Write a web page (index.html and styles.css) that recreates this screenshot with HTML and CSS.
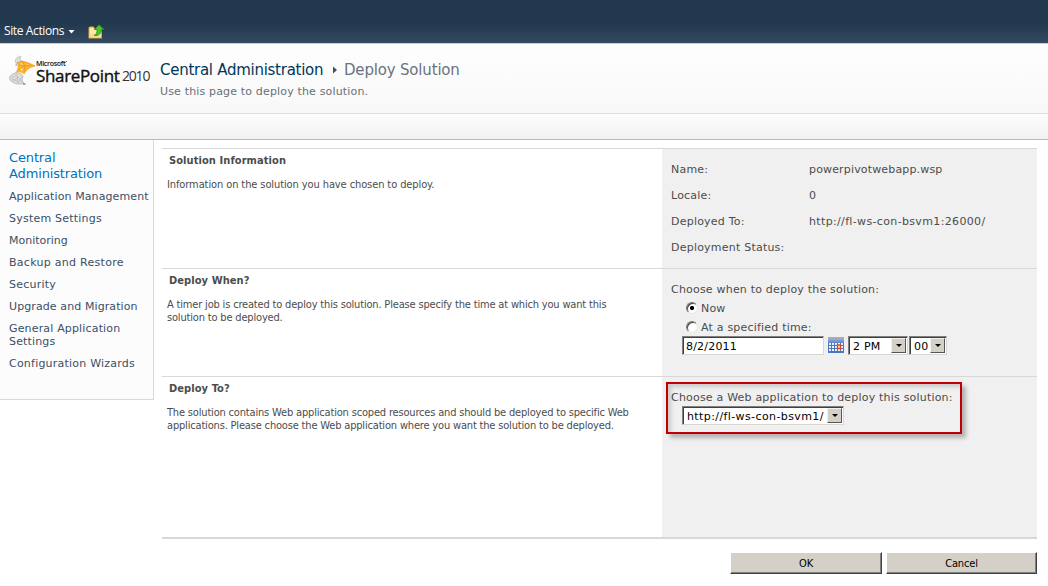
FILE: index.html
```
<!DOCTYPE html>
<html lang="en">
<head>
<meta charset="utf-8">
<title>Deploy Solution</title>
<link rel="stylesheet" href="styles.css">
</head>
<body>
<div class="ribbon">
  <span class="site-actions">Site Actions</span>
  <svg class="ribbon-caret" width="7" height="4" viewBox="0 0 7 4"><path d="M0.5 0h6L3.5 3.5z" fill="#fff"/></svg>
  <svg class="folder-up" width="17" height="16" viewBox="0 0 17 16">
    <path d="M.5 14.500V3.500l1-1h4l1.500 2h7v10z" fill="#d9a53b"/>
    <path d="M1.500 13.500V4.500l.8-1h2.700l1.500 2h6.500v8z" fill="#fbe9ae"/>
    <path d="M1.500 9.500h11.500v4H1.500z" fill="#f9dc94"/>
    <path d="M6 11.500C8.500 10.500 9.300 8.500 9 5.500H6.500L11 .7l5 4.800h-2.700c.2 4-2.800 6.500-7.300 6z" fill="#4cc428" stroke="#248a16" stroke-width=".8"/>
  </svg>
</div>
<header class="header">
  <div class="logo">
    <svg class="logo-mark" width="27" height="30" viewBox="0 0 27 30">
      <path d="M7 7C5 3 8 1 12 .5c-1.500 1.500-1 3.500 1.500 4.500L9 6.500 7 10z" fill="#e0e0de" stroke="#aaa" stroke-width=".6"/>
      <path d="M8 7c5-3 10-1 18 3-6 1-9 4-11 8-3-2-6-2-9-1 3-3 3-6 2-10z" fill="#fdb338"/>
      <path d="M8 7c5-3 10-1 18 3-6 1-9 4-11 8M13 5l3 5 6-1M10 9l6 1-1 6M9 14l7-4" fill="none" stroke="#f39a12" stroke-width=".9"/>
      <path d="M11 8l2-1 1 2zM11 13l3-1-1 3zM18 8l2 0-2 1z" fill="#ffeaa8"/>
      <path d="M5 17.500c4-1.500 8 0 9 3-1.500 2.500-1 4.500.5 6.500-4 2-9 1-12.500-2-3-3-1-6 3-7.500z" fill="#dededd" stroke="#a5a5a5" stroke-width=".7"/>
      <path d="M2 22l6-3 1 8M4 25l5-4 4 5M3 23l7 3 3-5" fill="none" stroke="#b2b2b2" stroke-width=".6"/>
      <path d="M14 28h2.500" stroke="#555"/>
    </svg>
    <div class="wordmark">
      <span class="brand">Microsoft<sup>•</sup></span>
      <span class="product">SharePoint</span>
      <span class="year">2010</span>
    </div>
  </div>
  <div class="title-area">
    <h1 class="crumbs"><span class="crumb-root">Central Administration</span><svg class="crumb-arrow" width="4" height="8" viewBox="0 0 4 8"><path d="M0 .5v7L4 4z" fill="#3f4f5f"/></svg><span class="crumb-page">Deploy Solution</span></h1>
    <p class="subtitle">Use this page to deploy the solution.</p>
  </div>
</header>
<div class="band"></div>
<div class="body">
  <nav class="nav">
    <a class="nav-head">Central<br>Administration</a>
    <a class="n1">Application Management</a>
    <a class="n2">System Settings</a>
    <a class="n3">Monitoring</a>
    <a class="n4">Backup and Restore</a>
    <a class="n5">Security</a>
    <a class="n6">Upgrade and Migration</a>
    <a class="n7">General Application<br>Settings</a>
    <a class="n8">Configuration Wizards</a>
  </nav>
  <main class="main">
    <section class="row row-info">
      <div class="about">
        <h2>Solution Information</h2>
        <p class="d-info">Information on the solution you have chosen to deploy.</p>
      </div>
      <dl class="fields facts">
        <dt>Name:</dt><dd class="v-name">powerpivotwebapp.wsp</dd>
        <dt>Locale:</dt><dd>0</dd>
        <dt>Deployed To:</dt><dd class="v-url">http://fl-ws-con-bsvm1:26000/</dd>
        <dt>Deployment Status:</dt><dd></dd>
      </dl>
    </section>
    <section class="row row-when">
      <div class="about">
        <h2>Deploy When?</h2>
        <p>A timer job is created to deploy this solution. Please specify the time at which you want this<br>solution to be deployed.</p>
      </div>
      <div class="fields when">
        <div class="line">Choose when to deploy the solution:</div>
        <div class="line option"><span class="radio checked"></span>Now</div>
        <div class="line option"><span class="radio"></span>At a specified time:</div>
        <div class="controls">
          <div class="box date">8/2/2011</div>
          <svg class="calendar" width="16" height="16" viewBox="0 0 16 16">
            <path d="M0 2h16v14H0z" fill="#4a76c4"/>
            <path d="M0 1h16v2H0z" fill="#e4e8ee"/>
            <path d="M1 0v3M3 0v3M5 0v3M7 0v3M9 0v3M11 0v3M13 0v3M15 0v3" stroke="#444c5a" stroke-width=".8"/>
            <path d="M0 3h16v2.500H0z" fill="#6f9ae0"/>
            <path d="M1 6h2v2H1zM4 6h2v2H4zM7 6h2v2H7zM10 6h2v2h-2zM13 6h2v2h-2zM1 9h2v2H1zM4 9h2v2H4zM7 9h2v2H7zM13 9h2v2h-2zM1 12h2v2H1zM4 12h2v2H4zM7 12h2v2H7zM10 12h2v2h-2zM13 12h2v2h-2z" fill="#eef4fc"/>
            <path d="M9.500 8h3v3.500h-3z" fill="#fff" stroke="#e3461c" stroke-width="1.400"/>
          </svg>
          <div class="box select hour"><span>2 PM</span><b class="drop"></b></div>
          <div class="box select minute"><span>00</span><b class="drop"></b></div>
        </div>
      </div>
    </section>
    <section class="row row-to">
      <div class="about">
        <h2>Deploy To?</h2>
        <p>The solution contains Web application scoped resources and should be deployed to specific Web<br>applications. Please choose the Web application where you want the solution to be deployed.</p>
      </div>
      <div class="fields target">
        <div class="line">Choose a Web application to deploy this solution:</div>
        <div class="box select webapp"><span>http://fl-ws-con-bsvm1/</span><b class="drop"></b></div>
        <div class="callout"></div>
      </div>
    </section>
    <div class="buttons">
      <button class="ok">OK</button>
      <button class="cancel">Cancel</button>
    </div>
  </main>
</div>
</body>
</html>
```
FILE: styles.css
```
* { box-sizing: border-box; }
body { margin: 0; width: 1048px; height: 586px; overflow: hidden; background: #fff; color: #4c4c4c; font: 11px/13px Verdana, "DejaVu Sans", sans-serif; white-space: nowrap; }
h1, h2, p, dl, dd { margin: 0; font-weight: normal; }
svg { display: block; flex: none; }

.ribbon { display: flex; height: 43px; padding: 24px 0 0 4px; background: linear-gradient(#21374c, #21384f 55%, #344a61); color: #fff; }
.site-actions { width: 64px; font: 12px/14px "Open Sans", sans-serif; letter-spacing: -.38px; }
.ribbon-caret { margin-top: 6px; }
.folder-up { margin: 0 0 0 13px; }

.header { display: flex; height: 71px; border-top: 1px solid #c9ced4; border-bottom: 1px solid #ddd; background: linear-gradient(#fefefe, #f8f8f8); }
.logo { display: flex; width: 160px; padding: 12px 0 0 9px; }
.wordmark { display: flex; flex-wrap: wrap; align-content: flex-start; width: 117px; padding-top: 4px; color: #111; font-family: "Open Sans", sans-serif; }
.brand { width: 117px; font-size: 7px; line-height: 7px; font-weight: 600; letter-spacing: -.3px; }
.brand sup { font-size: 4px; line-height: 0; }
.product { width: 86px; font-size: 17px; line-height: 17px; font-weight: 500; -webkit-text-stroke: .4px #111; letter-spacing: -.35px; }
.year { font-size: 14px; line-height: 18px; color: #333; letter-spacing: -1.200px; }
.title-area { padding-top: 16px; }
.crumbs { display: flex; align-items: center; height: 20px; font-size: 15px; line-height: 20px; }
.crumb-root { width: 173px; color: #003759; letter-spacing: -.27px; }
.crumb-page { margin-left: 7px; color: #6b7380; letter-spacing: -.18px; }
.subtitle { margin-top: 5px; color: #697078; line-height: 13px; letter-spacing: .16px; }
.band { height: 26px; border-bottom: 1px solid #b8babb; background: linear-gradient(#fdfdfd, #f2f2f2); }

.body { display: flex; align-items: flex-start; }
.nav { display: flex; flex-direction: column; gap: 9px; width: 154px; height: 260px; padding: 10px 0 0 9px; border: solid #d9dadb; border-width: 0 1px 1px 0; background: #fcfcfc; color: #3b4f65; }
.nav-head { margin-bottom: -1px; color: #0072bc; font-size: 13px; line-height: 16px; letter-spacing: -.14px; }
.n1, .n6 { letter-spacing: .1px; }
.n2, .n5, .n8 { letter-spacing: .22px; }
.n4 { letter-spacing: .28px; }
.n7 { letter-spacing: .16px; }
.main { width: 875px; margin: 8px 0 0 8px; }
.row { display: flex; border-top: 1px solid #d8d8d8; }
.row-info { height: 120px; }
.row-when { height: 108px; }
.row-to { height: 163px; border-bottom: 2px solid #d8d8d8; }
.about { width: 500px; padding: 5px 0 0 5px; font-family: Tahoma, "DejaVu Sans Condensed", "DejaVu Sans", sans-serif; font-stretch: condensed; }
.about h2 { padding-left: 2px; font-size: 11px; line-height: 13px; font-weight: bold; letter-spacing: .08px; }
.about p { margin-top: 11px; letter-spacing: -.175px; }
.about .d-info { letter-spacing: -.1px; }
.fields { width: 375px; padding-left: 9px; background: #f0f0f0; }
.facts { display: grid; grid-template-columns: 138px 1fr; grid-auto-rows: 26px; padding-top: 8px; line-height: 26px; letter-spacing: .22px; }
.v-name { letter-spacing: .16px; }
.v-url { letter-spacing: .35px; }
.when { padding-top: 11px; }
.line { line-height: 19px; height: 19px; letter-spacing: .2px; }
.option { display: flex; align-items: center; padding-left: 15px; }
.radio { width: 12px; height: 12px; margin: -2px 3px 0 0; border: 1px solid; border-color: #777 #e8e8e4 #e8e8e4 #777; border-radius: 50%; background: #fff; box-shadow: inset 1px 1px #444; }
.radio.checked { background: radial-gradient(circle, #000 0 1.900px, #fff 2.300px); }
.controls { display: flex; margin-top: -1px; padding-left: 11px; }
.box { height: 19px; border: 1px solid; border-color: #808080 #d9d6cf #d9d6cf #808080; box-shadow: inset 1px 1px #404040; background: #fff; color: #000; line-height: 19px; padding-left: 3px; letter-spacing: .2px; }
.date { width: 142px; }
.calendar { margin: 1px 4px 0; }
.select { display: flex; justify-content: space-between; padding: 1px 1px 1px 4px; line-height: 17px; }
.hour { width: 60px; margin-right: 1px; }
.minute { width: 38px; }
.drop { display: grid; place-items: center; width: 15px; height: 100%; background: #d4d0c8; border: 1px solid; border-color: #f2f0eb #555 #555 #f2f0eb; }
.drop::after { content: ""; border: solid transparent; border-width: 3px 3px 0; border-top-color: #000; }
.target { position: relative; padding-top: 11px; }
.webapp { width: 162px; margin: -1px 0 0 11px; letter-spacing: .4px; }
.callout { position: absolute; left: 4px; top: 5px; width: 296px; height: 52px; border: 2px solid #c00000; box-shadow: 4px 4px 4px #b4b4b4, inset 4px 4px 4px -1px rgba(0, 0, 0, .16); }
.buttons { display: flex; justify-content: flex-end; gap: 4px; padding-top: 13px; }
.buttons button { width: 152px; height: 22px; padding: 1px 0 0; border: 1px solid; border-color: #fff #404040 #404040 #fff; box-shadow: inset -1px -1px #808080; background: #d4d0c8; color: #000; font: 11px/18px Tahoma, "DejaVu Sans Condensed", sans-serif; letter-spacing: -.15px; }
.buttons .cancel { width: 151px; }
```
